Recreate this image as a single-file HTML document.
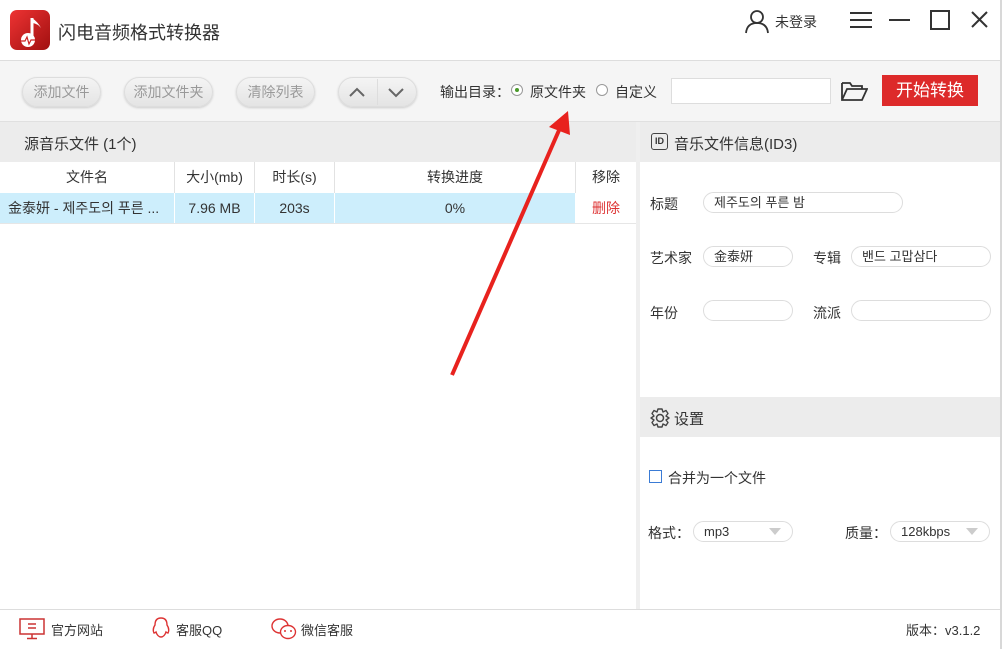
<!DOCTYPE html>
<html><head><meta charset="utf-8"><style>
*{margin:0;padding:0;box-sizing:border-box}
body{width:1002px;height:649px;position:relative;overflow:hidden;background:#fff;font-family:"Liberation Sans","Noto Sans CJK SC",sans-serif;font-size:14px;color:#333}
.a{position:absolute}
.btn{position:absolute;top:77px;height:30px;border-radius:15px;background:linear-gradient(#f4f4f4,#e4e4e4);border:1px solid #ddd;color:#999;text-align:center;line-height:28px;font-size:14px;box-shadow:0 1px 2px #ccc}
.th{position:absolute;top:162px;height:31px;line-height:31px;text-align:center;border-right:1px solid #e2e2e2;font-size:14px}
.td{position:absolute;top:193px;height:30px;line-height:30px;text-align:center;border-right:1px solid #fff;font-size:14px}
.inp{position:absolute;height:21px;border:1px solid #ddd;border-radius:11px;line-height:19px;padding-left:10px;font-size:13px}
.lbl{position:absolute;font-size:14px}
</style></head><body>
<!-- title bar -->
<div class="a" style="left:10px;top:10px;width:40px;height:40px;border-radius:7px;background:linear-gradient(135deg,#e33,#a01010)"></div>
<svg class="a" style="left:10px;top:10px" width="40" height="40"><path d="M22 8 L22 28" stroke="#fff" stroke-width="3"/><path d="M22 8 Q28 12 31 18 Q28 14 23 13" fill="#fff"/><circle cx="18" cy="30" r="7" fill="#fff"/><path d="M11 31 L15 31 L17 27 L19 34 L21 30 L25 30" stroke="#c22" stroke-width="1.2" fill="none"/></svg>
<div class="a" style="left:58px;top:19px;font-size:18px;color:#333">闪电音频格式转换器</div>
<svg class="a" style="left:745px;top:8px" width="28" height="26"><circle cx="12" cy="9" r="6" fill="none" stroke="#333" stroke-width="1.8"/><path d="M1 25 Q2 15 12 15 Q22 15 23 25" fill="none" stroke="#333" stroke-width="1.8"/></svg>
<div class="a" style="left:775px;top:12px;font-size:14px">未登录</div>
<svg class="a" style="left:848px;top:10px;" width="145" height="22"><path d="M2 3H24M2 10H24M2 17H24" stroke="#333" stroke-width="2" fill="none"/><path d="M41 10H62" stroke="#333" stroke-width="2"/><rect x="83" y="1" width="18" height="18" fill="none" stroke="#333" stroke-width="2"/><path d="M124 2L139 17M139 2L124 17" stroke="#333" stroke-width="2"/></svg>
<div class="a" style="left:0;top:60px;width:1000px;height:1px;background:#ddd"></div>
<!-- toolbar -->
<div class="a" style="left:0;top:61px;width:1000px;height:61px;background:#f5f5f5"></div>
<div class="btn" style="left:22px;width:79px">添加文件</div>
<div class="btn" style="left:124px;width:89px">添加文件夹</div>
<div class="btn" style="left:236px;width:79px">清除列表</div>
<div class="btn" style="left:338px;width:79px"></div>
<div class="a" style="left:377px;top:79px;width:1px;height:26px;background:#ddd"></div>
<svg class="a" style="left:338px;top:77px" width="79" height="30"><path d="M12 19L19 12L26 19M51 12L58 19L65 12" stroke="#666" stroke-width="2" fill="none"/></svg>
<div class="lbl" style="left:440px;top:82px">输出目录：</div>
<div class="a" style="left:511px;top:84px;width:12px;height:12px;border:1px solid #999;border-radius:50%;background:#fff"></div>
<div class="a" style="left:515px;top:88px;width:4px;height:4px;border-radius:50%;background:#4a9a2a"></div>
<div class="lbl" style="left:530px;top:82px">原文件夹</div>
<div class="a" style="left:596px;top:84px;width:12px;height:12px;border:1px solid #999;border-radius:50%;background:#fff"></div>
<div class="lbl" style="left:615px;top:82px">自定义</div>
<div class="a" style="left:671px;top:78px;width:160px;height:26px;border:1px solid #ddd;background:#fff"></div>
<svg class="a" style="left:840px;top:80px" width="28" height="22"><path d="M2 3H10L12 6H22V9M2 3V20H22L27 9H7L2 20" fill="none" stroke="#333" stroke-width="1.8"/></svg>
<div class="a" style="left:882px;top:75px;width:96px;height:31px;background:#dd2a2a;color:#fff;font-size:17px;text-align:center;line-height:31px">开始转换</div>
<div class="a" style="left:0;top:121px;width:1000px;height:1px;background:#e0e0e0"></div>
<!-- left panel -->
<div class="a" style="left:0;top:122px;width:636px;height:40px;background:#ececec"></div>
<div class="lbl" style="left:24px;top:133px;font-size:15px">源音乐文件 (1个)</div>
<div class="th" style="left:0;width:175px">文件名</div>
<div class="th" style="left:175px;width:80px">大小(mb)</div>
<div class="th" style="left:255px;width:80px">时长(s)</div>
<div class="th" style="left:335px;width:241px">转换进度</div>
<div class="th" style="left:576px;width:60px;border:none">移除</div>
<div class="a" style="left:0;top:193px;width:636px;height:30px;background:#cdeefc"></div>
<div class="td" style="left:0;width:175px;text-align:left;padding-left:8px;white-space:nowrap;overflow:hidden">金泰妍 - 제주도의 푸른 ...</div>
<div class="td" style="left:175px;width:80px">7.96 MB</div>
<div class="td" style="left:255px;width:80px">203s</div>
<div class="td" style="left:335px;width:241px">0%</div>
<div class="td" style="left:576px;width:60px;color:#d33;background:#fff;border:none">删除</div>
<div class="a" style="left:0;top:223px;width:636px;height:1px;background:#e6e6e6"></div>
<div class="a" style="left:636px;top:122px;width:4px;height:487px;background:#efefef"></div>
<!-- right panel -->
<div class="a" style="left:640px;top:122px;width:360px;height:40px;background:#ececec"></div>
<div class="a" style="left:651px;top:133px;width:17px;height:17px;border:1.5px solid #444;border-radius:3px;font-size:9px;font-weight:bold;text-align:center;line-height:14px">ID</div>
<div class="lbl" style="left:674px;top:133px;font-size:15px">音乐文件信息(ID3)</div>
<div class="lbl" style="left:650px;top:194px">标题</div>
<div class="inp" style="left:703px;top:192px;width:200px">제주도의 푸른 밤</div>
<div class="lbl" style="left:650px;top:248px">艺术家</div>
<div class="inp" style="left:703px;top:246px;width:90px">金泰妍</div>
<div class="lbl" style="left:813px;top:248px">专辑</div>
<div class="inp" style="left:851px;top:246px;width:140px">밴드 고맙삼다</div>
<div class="lbl" style="left:650px;top:303px">年份</div>
<div class="inp" style="left:703px;top:300px;width:90px"></div>
<div class="lbl" style="left:813px;top:303px">流派</div>
<div class="inp" style="left:851px;top:300px;width:140px"></div>
<div class="a" style="left:640px;top:397px;width:360px;height:40px;background:#ececec"></div>
<svg class="a" style="left:649px;top:407px" width="22" height="22"><circle cx="11" cy="11" r="3.5" fill="none" stroke="#444" stroke-width="1.5"/><path d="M9 2H13L14 5L17 3.5L19 6.5L17 9L20 11L17 13L19 15.5L17 18.5L14 17L13 20H9L8 17L5 18.5L3 15.5L5 13L2 11L5 9L3 6.5L5 3.5L8 5Z" fill="none" stroke="#444" stroke-width="1.4" stroke-linejoin="round"/></svg>
<div class="lbl" style="left:674px;top:408px;font-size:15px">设置</div>
<div class="a" style="left:649px;top:470px;width:13px;height:13px;border:1px solid #3a7bd5"></div>
<div class="lbl" style="left:668px;top:468px">合并为一个文件</div>
<div class="lbl" style="left:648px;top:523px">格式：</div>
<div class="inp" style="left:693px;top:521px;width:100px">mp3</div>
<svg class="a" style="left:769px;top:528px" width="12" height="8"><path d="M0 0H12L6 7Z" fill="#ccc"/></svg>
<div class="lbl" style="left:845px;top:523px">质量：</div>
<div class="inp" style="left:890px;top:521px;width:100px">128kbps</div>
<svg class="a" style="left:966px;top:528px" width="12" height="8"><path d="M0 0H12L6 7Z" fill="#ccc"/></svg>
<div class="a" style="left:1000px;top:0;width:2px;height:649px;background:#d8d8d8"></div>
<!-- footer -->
<div class="a" style="left:0;top:609px;width:1000px;height:1px;background:#ddd"></div>
<svg class="a" style="left:19px;top:618px" width="26" height="22"><rect x="1" y="1" width="24" height="15" fill="none" stroke="#c33" stroke-width="1.5"/><path d="M9 6H17M9 10H17M13 16V20M8 20.5H18" stroke="#c33" stroke-width="1.5"/></svg>
<div class="lbl" style="left:51px;top:620px;font-size:13px">官方网站</div>
<svg class="a" style="left:150px;top:616px" width="22" height="24"><path d="M11 2C6 2 5 6 5 9C3 12 3 15 4 17C5 17 6 16 6 16C7 19 9 21 11 21C13 21 15 19 16 16C16 16 17 17 18 17C19 15 19 12 17 9C17 6 16 2 11 2Z" fill="none" stroke="#d33" stroke-width="1.4"/></svg>
<div class="lbl" style="left:176px;top:620px;font-size:13px">客服QQ</div>
<svg class="a" style="left:271px;top:617px" width="26" height="24"><ellipse cx="9" cy="9" rx="8" ry="7" fill="none" stroke="#d33" stroke-width="1.4"/><ellipse cx="17" cy="15" rx="7.5" ry="6.5" fill="#fff" stroke="#d33" stroke-width="1.4"/><circle cx="14" cy="14" r="1" fill="#d33"/><circle cx="20" cy="14" r="1" fill="#d33"/></svg>
<div class="lbl" style="left:301px;top:620px;font-size:13px">微信客服</div>
<div class="lbl" style="left:906px;top:620px;font-size:13px">版本：v3.1.2</div>
<!-- red arrow -->
<svg class="a" style="left:0;top:0" width="1002" height="649"><line x1="452" y1="375" x2="560" y2="128" stroke="#e8221e" stroke-width="4"/><path d="M568 111L570 135L549 127Z" fill="#e8221e"/></svg>
</body></html>
